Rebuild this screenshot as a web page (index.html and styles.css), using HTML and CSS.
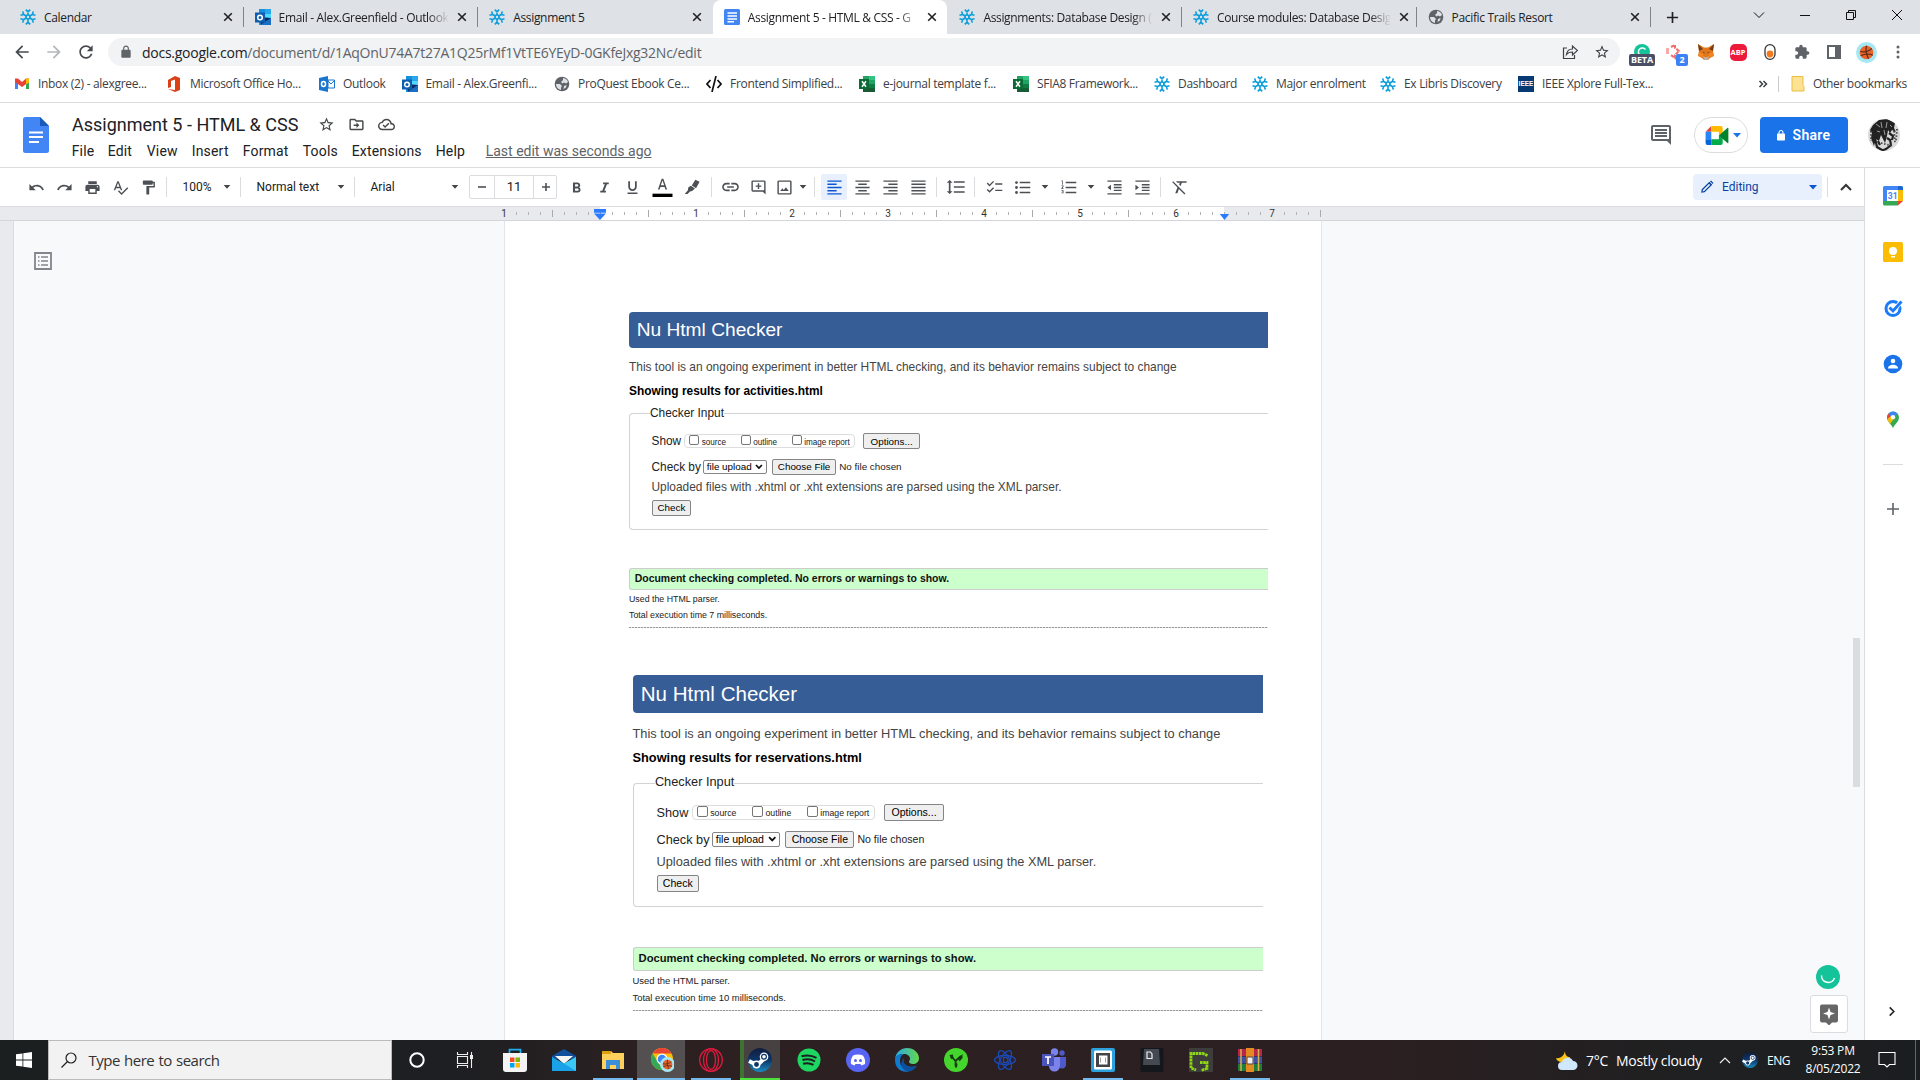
FILE: index.html
```html
<!DOCTYPE html>
<html lang="en">
<head>
<meta charset="utf-8">
<title>Assignment 5 - HTML &amp; CSS - Google Docs</title>
<link rel="stylesheet" href="styles.css">
</head>
<body>
<svg class="sprite" aria-hidden="true">
  <symbol id="flake" viewBox="0 0 16 16"><g fill="none" stroke="#0b9edb" stroke-width="1.600"><circle cx="8" cy="8" r="2"/><g id="arm"><path d="M8 6V2.600M5.800.6L8 2.900 10.200.6"/></g><use href="#arm" transform="rotate(60 8 8)"/><use href="#arm" transform="rotate(120 8 8)"/><use href="#arm" transform="rotate(180 8 8)"/><use href="#arm" transform="rotate(240 8 8)"/><use href="#arm" transform="rotate(300 8 8)"/></g></symbol>
  <symbol id="outlook" viewBox="0 0 16 16"><path fill="#1490df" d="M4 0h12v16H4z"/><path fill="#28a8ea" d="M10 0h6v5h-6z"/><path fill="#50d9ff" d="M10 5h6v4h-6z"/><path fill="#0a2767" d="M5 8l11 1v7H6z"/><path fill="#1a6fc4" d="M5 16l11-7v7z"/><path fill="#0f5fae" d="M0 3.500h10v10H0z"/><circle cx="5" cy="8.500" r="2.300" fill="none" stroke="#fff" stroke-width="1.500"/></symbol>
  <symbol id="outlook-old" viewBox="0 0 16 16"><path fill="#1a75cf" d="M0 2l9-2v16l-9-2z"/><path fill="#fff" stroke="#1a75cf" d="M9 4h6.500v8H9z"/><path fill="none" stroke="#1a75cf" d="M9 5l3 3 3.500-3.500"/><ellipse cx="4.500" cy="8" rx="2" ry="2.500" fill="none" stroke="#fff" stroke-width="1.500"/></symbol>
  <symbol id="docs" viewBox="0 0 16 16"><rect width="16" height="16" rx="1.500" fill="#4285f4"/><path d="M3.500 4h9.500M3.500 7h9.500M3.500 10h9.500M3.500 12.700h6.500" stroke="#fff" stroke-width="1.500"/></symbol>
  <symbol id="globe" viewBox="0 0 16 16"><circle cx="8" cy="8" r="7.300" fill="#5f6368"/><path fill="#dee1e6" d="M9 2c3 .5 4.500 2 5 4l-2 1.500-2-1-1.500 1L7 6l2-2zM2 8h4l2 2-1 1.500V14C4 13.500 2 11 2 8zM10 10l2.500-1-.5 2.500-2.500 1.500z"/></symbol>
  <symbol id="x" viewBox="0 0 16 16"><path d="M4.200 4.200l7.600 7.600M11.800 4.200l-7.600 7.600" stroke="#202124" stroke-width="1.600"/></symbol>
  <symbol id="excel" viewBox="0 0 16 16"><path fill="#21a366" d="M4 0h12v16H4z"/><path fill="#33c481" d="M10 0h6v4h-6z"/><path fill="#107c41" d="M10 8h6v4h-6z"/><path fill="#185c37" d="M4 12h12v4H4z"/><path fill="#0b6b34" d="M0 3h10v10H0z"/><path d="M3 5.300l4 5.400M7 5.300l-4 5.400" stroke="#fff" stroke-width="1.500"/></symbol>
  <symbol id="star" viewBox="0 0 24 24"><path d="M22 9.240l-7.190-.62L12 2 9.190 8.630 2 9.240l5.460 4.730L5.820 21 12 17.270 18.180 21l-1.630-7.030L22 9.240zM12 15.400l-3.760 2.270 1-4.280-3.320-2.880 4.380-.38L12 6.100l1.710 4.040 4.380.38-3.320 2.880 1 4.280L12 15.400z"/></symbol>
  <symbol id="lock" viewBox="0 0 24 24"><path d="M18 8h-1V6c0-2.760-2.240-5-5-5S7 3.240 7 6v2H6c-1.100 0-2 .9-2 2v10c0 1.100.9 2 2 2h12c1.100 0 2-.9 2-2V10c0-1.100-.9-2-2-2zM9 6c0-1.660 1.340-3 3-3s3 1.340 3 3v2H9V6z"/></symbol>
  <symbol id="down" viewBox="0 0 10 6"><path d="M0 0h10L5 5.500z"/></symbol>
  <linearGradient id="sg" x1="0" y1="0" x2="0" y2="1"><stop offset="0" stop-color="#111d3e"/><stop offset=".5" stop-color="#0d3567"/><stop offset="1" stop-color="#1a8bc0"/></linearGradient>
  <symbol id="steam" viewBox="0 0 24 24"><circle cx="12" cy="12" r="12" fill="url(#sg)"/><path d="M1 13l8 4 7-6" stroke="#fff" stroke-width="4" fill="none"/><circle cx="8.500" cy="16.500" r="3.200" fill="#0d3567" stroke="#fff" stroke-width="1.500"/><circle cx="16" cy="8.800" r="4.300" fill="#fff"/><circle cx="16" cy="8.800" r="2.400" fill="none" stroke="#0d3567" stroke-width="1.200"/></symbol>
  <symbol id="ball" viewBox="0 0 20 20"><circle cx="10" cy="10" r="10" fill="#a5e8f3"/><circle cx="10" cy="10" r="6.500" fill="#e8642c"/><path d="M4 9c4 1 8 0 11-3M10 3.500c-1 4 0 9 2 12.500M4.500 13c4-2 8-2 11.500-.5" stroke="#5c2a18" stroke-width="1.100" fill="none"/></symbol>
</svg>

<header class="tabs">
  <div class="tab"><svg class="fav"><use href="#flake"/></svg><span>Calendar</span><svg class="fav"><use href="#x"/></svg></div>
  <div class="tab"><svg class="fav"><use href="#outlook"/></svg><span class="fade">Email - Alex.Greenfield - Outlook</span><svg class="fav"><use href="#x"/></svg></div>
  <div class="tab last"><svg class="fav"><use href="#flake"/></svg><span>Assignment 5</span><svg class="fav"><use href="#x"/></svg></div>
  <div class="tab active"><svg class="fav"><use href="#docs"/></svg><span class="fade">Assignment 5 - HTML &amp; CSS - G</span><svg class="fav"><use href="#x"/></svg></div>
  <div class="tab"><svg class="fav"><use href="#flake"/></svg><span class="fade">Assignments: Database Design (</span><svg class="fav"><use href="#x"/></svg></div>
  <div class="tab"><svg class="fav"><use href="#flake"/></svg><span class="fade">Course modules: Database Desig</span><svg class="fav"><use href="#x"/></svg></div>
  <div class="tab"><svg class="fav"><use href="#globe"/></svg><span>Pacific Trails Resort</span><svg class="fav"><use href="#x"/></svg></div>
  <svg class="newtab" viewBox="0 0 14 14"><path d="M7 1v12M1 7h12" stroke="#202124" stroke-width="1.800"/></svg>
  <div class="winctl">
    <svg viewBox="0 0 12 12"><path d="M1 3.500l5 5 5-5"/></svg>
    <svg viewBox="0 0 12 12"><path d="M1 6.500h10"/></svg>
    <svg viewBox="0 0 12 12"><path d="M1.500 3.500h7v7h-7zM3.500 3.500v-2h7v7h-2"/></svg>
    <svg viewBox="0 0 12 12"><path d="M1 1l10 10M11 1L1 11"/></svg>
  </div>
</header>

<div class="addressbar">
  <svg class="nav" viewBox="0 0 24 24"><path d="M20 11H7.830l5.590-5.590L12 4l-8 8 8 8 1.410-1.410L7.830 13H20v-2z"/></svg>
  <svg class="nav off" viewBox="0 0 24 24"><path d="M4 11h12.170l-5.590-5.590L12 4l8 8-8 8-1.410-1.410L16.170 13H4v-2z"/></svg>
  <svg class="nav" viewBox="0 0 24 24"><path d="M17.650 6.350C16.200 4.900 14.210 4 12 4c-4.420 0-7.990 3.580-7.990 8s3.570 8 7.990 8c3.730 0 6.840-2.550 7.730-6h-2.080c-.82 2.330-3.040 4-5.650 4-3.310 0-6-2.690-6-6s2.690-6 6-6c1.660 0 3.140.69 4.220 1.780L13 11h7V4l-2.350 2.350z"/></svg>
  <div class="omnibox">
    <svg class="lock"><use href="#lock"/></svg>
    <span class="url"><b>docs.google.com</b>/document/d/1AqOnU74A7t27A1Q25rMf1VtTE6YEyD-0GKfeJxg32Nc/edit</span>
    <svg class="s16" viewBox="0 0 16 16"><path d="M5 4H1.500v10.500h11V11M4.500 10.500C5 6.500 7.500 5 10.500 5V2l5 4.500-5 4.500V8c-2.500 0-4.500.5-6 2.500z" fill="none" stroke="#3c4043" stroke-width="1.200"/></svg>
    <svg class="s16 dark"><use href="#star"/></svg>
  </div>
  <div class="exts">
    <div class="ext"><svg class="s16" viewBox="0 0 16 16"><circle cx="8" cy="8" r="8" fill="#15c39a"/><path d="M11.500 5.500a4 4 0 1 0 0 5" fill="none" stroke="#fff" stroke-width="1.500"/></svg><span class="badge beta">BETA</span></div>
    <div class="ext"><svg class="s16" viewBox="0 0 16 16"><path d="M0 4h3v6H0z" fill="#f9a7a7"/><path d="M5 3l4-2v3l4 3-4 4v3l-4-3" fill="none" stroke="#f26d6d" stroke-width="2" stroke-dasharray="3.500 1"/></svg><span class="badge count">2</span></div>
    <div class="ext"><svg class="s16" viewBox="0 0 16 16"><path d="M0 0l6 3.500h4L16 0l-1 7 1 5-4 2-2 2H6l-2-2-4-2 1-5z" fill="#e2761b"/><path d="M5 12l1.500 1h3L11 12l-1 4H6z" fill="#c0ad9e"/><path d="M1 12l3 1.500L5.500 10 1.500 8zM15 12l-3 1.500-1.500-3.500 4-2z" fill="#f6851b"/><path d="M4.500 8l1.800.2.2 1.300zM11.500 8l-1.800.2-.2 1.300z" fill="#233447"/><path d="M0 0l5 5-4 2zM16 0l-5 5 4 2z" fill="#763d16"/></svg></div>
    <div class="ext"><span class="abp">ABP</span></div>
    <div class="ext"><svg class="s16" viewBox="0 0 16 16"><rect x="3" y=".7" width="10" height="14.600" rx="5" fill="#fff" stroke="#333" stroke-width="1.300"/><circle cx="8" cy="10" r="3.400" fill="#f37a1f"/></svg></div>
    <div class="ext"><svg class="s16 grey" viewBox="0 0 24 24"><path d="M20.500 11H19V7c0-1.100-.9-2-2-2h-4V3.500C13 2.120 11.880 1 10.500 1S8 2.120 8 3.500V5H4c-1.100 0-1.990.9-1.990 2v3.800H3.500c1.490 0 2.700 1.210 2.700 2.700s-1.210 2.700-2.700 2.700H2V20c0 1.100.9 2 2 2h3.800v-1.500c0-1.490 1.210-2.700 2.700-2.700 1.490 0 2.700 1.210 2.700 2.700V22H17c1.100 0 2-.9 2-2v-4h1.500c1.380 0 2.500-1.120 2.500-2.500S21.880 11 20.500 11z"/></svg></div>
    <div class="ext"><svg class="s16 grey" viewBox="0 0 16 16"><path fill-rule="evenodd" d="M1 1h14v14H1zm2 2v10h6V3z"/></svg></div>
    <div class="ext"><svg class="s21"><use href="#ball"/></svg></div>
    <div class="ext"><svg class="s16 grey" viewBox="0 0 16 16"><circle cx="8" cy="3" r="1.500"/><circle cx="8" cy="8" r="1.500"/><circle cx="8" cy="13" r="1.500"/></svg></div>
  </div>
</div>

<nav class="bookmarks">
  <a><svg viewBox="0 0 16 16"><path d="M1 3v10h3V7" fill="#4285f4"/><path d="M15 3v10h-3V7" fill="#34a853"/><path d="M1 2.500h3l4 3.500 4-3.500h3V6l-7 5-7-5z" fill="#ea4335"/><path d="M12 2.500h3v4l-3 2z" fill="#fbbc04"/></svg><span>Inbox (2) - alexgree...</span></a>
  <a><svg viewBox="0 0 16 16"><path d="M2 4l7-4 5 2v12l-5 2-7-3 7 1V3.500L5 5v6l-3 1z" fill="#dc3e15"/></svg><span>Microsoft Office Ho...</span></a>
  <a><svg><use href="#outlook-old"/></svg><span>Outlook</span></a>
  <a><svg><use href="#outlook"/></svg><span>Email - Alex.Greenfi...</span></a>
  <a><svg><use href="#globe"/></svg><span>ProQuest Ebook Ce...</span></a>
  <a><svg viewBox="0 0 16 16"><path d="M4.500 4L1 8l3.500 4M11.500 4L15 8l-3.500 4M10 0L6 16" fill="none" stroke="#111" stroke-width="1.700"/></svg><span>Frontend Simplified...</span></a>
  <a><svg><use href="#excel"/></svg><span>e-journal template f...</span></a>
  <a><svg><use href="#excel"/></svg><span>SFIA8 Framework...</span></a>
  <a><svg><use href="#flake"/></svg><span>Dashboard</span></a>
  <a><svg><use href="#flake"/></svg><span>Major enrolment</span></a>
  <a><svg><use href="#flake"/></svg><span>Ex Libris Discovery</span></a>
  <a><i class="ieee">IEEE</i><span>IEEE Xplore Full-Tex...</span></a>
  <svg class="more" viewBox="0 0 10 8"><path d="M1.500 1l3 3-3 3M5.500 1l3 3-3 3" fill="none" stroke="#3c4043" stroke-width="1.500"/></svg>
  <a class="other"><svg viewBox="0 0 16 16"><path d="M2 .5h11v9l1 1v4.500H2z" fill="#fde293" stroke="#e8bf3f"/></svg><span>Other bookmarks</span></a>
</nav>

<div class="dochead">
  <svg class="doclogo" viewBox="0 0 26 36"><path d="M2.500 0H17l9 9v24.500a2.500 2.500 0 0 1-2.500 2.500h-21A2.500 2.500 0 0 1 0 33.500v-31A2.500 2.500 0 0 1 2.500 0z" fill="#4285f4"/><path d="M17 0l9 9h-9z" fill="#185abc"/><path d="M6 15.500h14M6 20h14M6 25h10" stroke="#fff" stroke-width="2"/></svg>
  <div class="doctitles">
    <div class="titlerow"><span class="title">Assignment 5 - HTML &amp; CSS</span>
      <svg><use href="#star"/></svg>
      <svg viewBox="0 0 24 24"><path d="M20 6h-8l-2-2H4c-1.100 0-2 .9-2 2v12c0 1.100.9 2 2 2h16c1.100 0 2-.9 2-2V8c0-1.100-.9-2-2-2zm0 12H4V6h5.200l2 2H20v10zm-8-1l4-4-4-4v3H8v2h4z"/></svg>
      <svg viewBox="0 0 24 24"><path d="M19.350 10.040C18.670 6.590 15.640 4 12 4 9.110 4 6.610 5.640 5.350 8.040 2.340 8.360 0 10.910 0 14c0 3.310 2.690 6 6 6h13c2.760 0 5-2.240 5-5 0-2.640-2.050-4.780-4.650-4.960zM19 18H6c-2.210 0-4-1.790-4-4s1.790-4 4-4h.7C7.400 7.700 9.500 6 12 6c3 0 5.500 2.500 5.500 6H19c1.700 0 3 1.300 3 3s-1.300 3-3 3zm-9-3.800l-2.100-2.100-1.400 1.400L10 17l6-6-1.400-1.400z"/></svg>
    </div>
    <div class="menus"><span>File</span><span>Edit</span><span>View</span><span>Insert</span><span>Format</span><span>Tools</span><span>Extensions</span><span>Help</span><u>Last edit was seconds ago</u></div>
  </div>
  <div class="headright">
    <svg class="s24 grey" viewBox="0 0 24 24"><path d="M21.990 4c0-1.100-.89-2-1.990-2H4c-1.100 0-2 .9-2 2v12c0 1.100.9 2 2 2h14l4 4-.01-18zM20 4v12H4V4zM18 12H6v2h12v-2zm0-3H6v2h12V9zm0-3H6v2h12V6z" fill-rule="evenodd"/></svg>
    <div class="meet"><svg class="cam" viewBox="0 0 24 20"><path d="M6 0v6H0z" fill="#ea4335"/><path d="M0 6h6v8H0z" fill="#2684fc"/><path d="M0 14h6v6H2a2 2 0 0 1-2-2z" fill="#0066da"/><path d="M6 0h10a2 2 0 0 1 2 2v6l-4 2V6H6z" fill="#ffba00"/><path d="M6 14h8v-4l4 2v6a2 2 0 0 1-2 2H6z" fill="#00ac47"/><path d="M14 10l9-8c.6-.5 1-.2 1 .5v15c0 .7-.4 1-1 .5z" fill="#00832d"/></svg><svg class="arr blue"><use href="#down"/></svg></div>
    <div class="share"><svg class="s14"><use href="#lock"/></svg>Share</div>
    <svg class="me" viewBox="0 0 32 32"><defs><clipPath id="round"><circle cx="16" cy="16" r="16"/></clipPath></defs><g clip-path="url(#round)"><path fill="#d9d9d9" d="M0 0h32v32H0z"/><path fill="#222" d="M5 6l6-5 8-1 8 4-1 5 2 4-4-2-2 3-2-3-1 6-2 7-4-8-2 6-3-2-2 7-3-8 1-5-2-3z"/><path d="M8 5l4 3M13 3l1 6M19 3l-1 6M9 12l3 1M22 6l2 2M16 11l1 5" stroke="#aaa" stroke-width=".9"/><path d="M7 19l2 9 5 3M19 19l3 2 1 5-5 4-5 2M21 14l4 3-1 4M10 22l2 4" stroke="#222" stroke-width="2.200" fill="none"/><path d="M26 12l1 12M29 10l-1 12M13 24l12 3M3 12v10" stroke="#444" stroke-width="1.800" stroke-dasharray="1.500 1.700"/></g></svg>
  </div>
</div>

<div class="workspace">
  <main>
    <div class="toolbar">
      <svg viewBox="0 0 24 24"><path d="M12.500 8c-2.650 0-5.050.99-6.900 2.600L2 7v9h9l-3.620-3.620c1.390-1.160 3.160-1.880 5.120-1.880 3.540 0 6.550 2.310 7.600 5.500l2.370-.78C21.080 11.030 17.150 8 12.500 8z"/></svg>
      <svg viewBox="0 0 24 24"><path d="M18.400 10.600C16.550 8.990 14.150 8 11.500 8c-4.650 0-8.580 3.030-9.960 7.220L3.900 16c1.050-3.190 4.050-5.500 7.600-5.500 1.950 0 3.730.72 5.120 1.880L13 16h9V7l-3.600 3.600z"/></svg>
      <svg viewBox="0 0 24 24"><path d="M19 8H5c-1.660 0-3 1.340-3 3v6h4v4h12v-4h4v-6c0-1.660-1.340-3-3-3zm-3 11H8v-5h8v5zm3-7c-.55 0-1-.45-1-1s.45-1 1-1 1 .45 1 1-.45 1-1 1zm-1-9H6v4h12V3z"/></svg>
      <svg viewBox="0 0 24 24"><path d="M12.450 16h2.090L9.430 3H7.570L2.460 16h2.090l1.120-3h5.640l1.140 3zm-6.020-5L8.500 5.480 10.570 11H6.430zm15.160.59l-8.090 8.090L9.830 16l-1.410 1.410 5.090 5.090L23 13l-1.410-1.410z"/></svg>
      <svg viewBox="0 0 24 24"><path d="M18 4V3c0-.55-.45-1-1-1H5c-.55 0-1 .45-1 1v4c0 .55.45 1 1 1h12c.55 0 1-.45 1-1V6h1v4H9v11c0 .55.45 1 1 1h2c.55 0 1-.45 1-1v-9h8V4h-3z"/></svg>
      <i class="sep"></i>
      <div class="drop"><span>100%</span><svg class="arr"><use href="#down"/></svg></div>
      <i class="sep"></i>
      <div class="drop"><span>Normal text</span><svg class="arr"><use href="#down"/></svg></div>
      <i class="sep"></i>
      <div class="drop font"><span>Arial</span><svg class="arr"><use href="#down"/></svg></div>
      <div class="size"><svg viewBox="0 0 10 10"><path d="M1 4.200h8v1.600H1z"/></svg><span>11</span><svg viewBox="0 0 10 10"><path d="M1 4.200h3.200V1h1.600v3.200H9v1.600H5.800V9H4.200V5.800H1z"/></svg></div>
      <svg class="after" viewBox="0 0 24 24"><path d="M15.600 11.790c.97-.67 1.650-1.770 1.650-2.790 0-2.260-1.750-4-4-4H7v14h7.040c2.090 0 3.710-1.700 3.710-3.790 0-1.520-.86-2.820-2.150-3.420zM10 7.500h3c.83 0 1.500.67 1.500 1.500s-.67 1.500-1.500 1.500h-3v-3zm3.500 9H10v-3h3.500c.83 0 1.500.67 1.500 1.500s-.67 1.500-1.500 1.500z"/></svg>
      <svg viewBox="0 0 24 24"><path d="M10 5v2.500h2.500l-3.700 9H6V19h8v-2.500h-2.200l3.700-9H18V5z"/></svg>
      <svg viewBox="0 0 24 24"><path d="M12 17c3.310 0 6-2.690 6-6V3h-2.500v8c0 1.930-1.570 3.500-3.500 3.500S8.500 12.930 8.500 11V3H6v8c0 3.310 2.690 6 6 6zm-7 2v2h14v-2H5z"/></svg>
      <svg class="wide" viewBox="0 0 24 24"><path d="M11 2L6.500 15h2l1-3h5l1 3h2L13 2zM10 10L12 4.200 14 10z"/><path d="M0 20h24v4H0z" fill="#000"/></svg>
      <svg viewBox="0 0 24 24"><path d="M16 1l6 3-5 9-6-4zM9.500 9.500l6 4-4 3.500-3 .5L5 21H1l4.500-5 .5-4z"/></svg>
      <i class="sep"></i>
      <svg class="wide" viewBox="0 0 24 24"><path d="M3.900 12c0-1.710 1.390-3.100 3.100-3.100h4V7H7c-2.760 0-5 2.240-5 5s2.240 5 5 5h4v-1.900H7c-1.710 0-3.100-1.390-3.100-3.100zM8 13h8v-2H8v2zm9-6h-4v1.900h4c1.710 0 3.100 1.390 3.100 3.100s-1.390 3.100-3.100 3.100h-4V17h4c2.760 0 5-2.240 5-5s-2.240-5-5-5z"/></svg>
      <svg viewBox="0 0 24 24"><path fill-rule="evenodd" d="M4 2h16a2 2 0 0 1 2 2v18l-4-4H4a2 2 0 0 1-2-2V4a2 2 0 0 1 2-2zm0 2v12h16V4zm7 2h2v3h3v2h-3v3h-2v-3H8V9h3z"/></svg>
      <svg viewBox="0 0 24 24"><path fill-rule="evenodd" d="M4 2h16a2 2 0 0 1 2 2v16a2 2 0 0 1-2 2H4a2 2 0 0 1-2-2V4a2 2 0 0 1 2-2zm0 2v16h16V4zm2 13l3-4 2 2.500 3-4 4 5.500z"/></svg>
      <svg class="arr"><use href="#down"/></svg>
      <i class="sep"></i>
      <div class="on"><svg viewBox="0 0 24 24"><path d="M2 2h20v2H2zM2 6.500h13v2H2zM2 11h20v2H2zM2 15.500h13v2H2zM2 20h20v2H2z"/></svg></div>
      <svg viewBox="0 0 24 24"><path d="M2 2h20v2H2zM6 6.500h12v2H6zM2 11h20v2H2zM6 15.500h12v2H6zM2 20h20v2H2z"/></svg>
      <svg viewBox="0 0 24 24"><path d="M2 2h20v2H2zM9 6.500h13v2H9zM2 11h20v2H2zM9 15.500h13v2H9zM2 20h20v2H2z"/></svg>
      <svg viewBox="0 0 24 24"><path d="M2 2h20v2H2zM2 6.500h20v2H2zM2 11h20v2H2zM2 15.500h20v2H2zM2 20h20v2H2z"/></svg>
      <i class="sep"></i>
      <svg class="wide" viewBox="0 0 24 24"><path d="M6 7h2.500L5 3.500 1.500 7H4v10H1.500L5 20.500 8.500 17H6V7zm4-2v2h13V5H10zm0 14h13v-2H10v2zm0-6h13v-2H10v2z"/></svg>
      <i class="sep"></i>
      <svg viewBox="0 0 24 24"><path d="M13 6h10v2H13zM13 15h10v2H13zM1 6.500l1.400-1.400L5 7.700l5-5L11.400 4 5 10.500zM1 15.500l1.400-1.400L5 16.700l5-5 1.400 1.400L5 19.500z"/></svg>
      <svg viewBox="0 0 24 24"><path d="M8 4h15v2H8zM8 11h15v2H8zM8 18h15v2H8z"/><circle cx="3.500" cy="5" r="2"/><circle cx="3.500" cy="12" r="2"/><circle cx="3.500" cy="19" r="2"/></svg>
      <svg class="arr"><use href="#down"/></svg>
      <svg viewBox="0 0 24 24"><path d="M8 4h15v2H8zM8 11h15v2H8zM8 18h15v2H8zM2 17h2v.5H3v1h1v.5H2v1h3v-4H2v1zm1-9h1V2H2v1h1v5zm-1 2h1.800L2 13.100v.9h3v-1H3.200L5 10.900V9H2v1z"/></svg>
      <svg class="arr"><use href="#down"/></svg>
      <svg viewBox="0 0 24 24"><path d="M11 17h11v-2H11v2zm-9-5l5 4V8l-5 4zm0 10h20v-2H2v2zM2 2v2h20V2H2zm9 7h11V7H11v2zm0 4h11v-2H11v2z"/></svg>
      <svg viewBox="0 0 24 24"><path d="M2 22h20v-2H2v2zM2 8v8l5-4-5-4zm9 9h11v-2H11v2zM2 2v2h20V2H2zm9 7h11V7H11v2zm0 4h11v-2H11v2z"/></svg>
      <i class="sep"></i>
      <svg viewBox="0 0 24 24"><path d="M3 3L1.600 4.400l7.500 7.500L6 20h3l2.200-6 7.800 7.800 1.400-1.400zM7 3l2 2.300h3.400L11.600 8l2 2 1.700-4.700H22V3z"/></svg>
      <div class="editing"><svg viewBox="0 0 24 24"><path fill-rule="evenodd" d="M2 22l1-6L16 3l5 5L8 21zm2.500-2.500l2.700-.5L17.500 8.500 15.500 6.500 5 17zM17 2l2-1 4 4-1 2z"/></svg><span>Editing</span><svg class="arr"><use href="#down"/></svg></div>
      <i class="sep"></i>
      <svg class="up" viewBox="0 0 12 8"><path d="M1 7l5-5 5 5" fill="none" stroke="#333" stroke-width="2"/></svg>
    </div>
    <div class="ruler">
      <div class="inch grey"><b>1</b></div><div class="inch"></div><div class="inch"><b>1</b></div><div class="inch"><b>2</b></div><div class="inch"><b>3</b></div><div class="inch"><b>4</b></div><div class="inch"><b>5</b></div><div class="inch half"><b>6</b></div><div class="inch half grey"></div><div class="inch tail grey"><b>7</b></div>
      <svg class="mark left" viewBox="0 0 13 12"><path d="M0 0h13v4H0zM0 5h13L6.500 12z" fill="#2a7bfd"/></svg>
      <svg class="mark right" viewBox="0 0 11 7"><path d="M0 0h11L5.500 7z" fill="#2a7bfd"/></svg>
    </div>
    <div class="canvas">
      <div class="vruler"></div>
      <svg class="outline" viewBox="0 0 18 18"><path d="M1 1h16v16H1z" fill="none" stroke="#80868b" stroke-width="1.800"/><path d="M4 5h1.500M7 5h7M4 9h1.500M7 9h7M4 13h1.500M7 13h7" stroke="#80868b" stroke-width="1.700"/></svg>
      <article class="page">
        <section class="shot one">
          <h1>Nu Html Checker</h1>
          <p class="intro">This tool is an ongoing experiment in better HTML checking, and its behavior remains subject to change</p>
          <h2>Showing results for activities.html</h2>
          <div class="input">
            <div class="legend">Checker Input</div>
            <div class="row show"><span>Show</span><div class="opts"><i class="cb"></i><em>source</em><i class="cb"></i><em>outline</em><i class="cb"></i><em>image report</em></div><div class="btn options">Options...</div></div>
            <div class="row by"><span>Check by</span><div class="btn select">file upload<svg viewBox="0 0 8 6"><path d="M1 1l3 3.200L7 1" fill="none" stroke="#111" stroke-width="1.700"/></svg></div><div class="btn choose">Choose File</div><small>No file chosen</small></div>
            <p class="note">Uploaded files with .xhtml or .xht extensions are parsed using the XML parser.</p>
            <div class="btn check">Check</div>
          </div>
          <div class="ok">Document checking completed. No errors or warnings to show.</div>
          <p class="stat">Used the HTML parser.</p>
          <p class="stat">Total execution time 7 milliseconds.</p>
          <div class="rule"></div>
        </section>
        <section class="shot two">
          <h1>Nu Html Checker</h1>
          <p class="intro">This tool is an ongoing experiment in better HTML checking, and its behavior remains subject to change</p>
          <h2>Showing results for reservations.html</h2>
          <div class="input">
            <div class="legend">Checker Input</div>
            <div class="row show"><span>Show</span><div class="opts"><i class="cb"></i><em>source</em><i class="cb"></i><em>outline</em><i class="cb"></i><em>image report</em></div><div class="btn options">Options...</div></div>
            <div class="row by"><span>Check by</span><div class="btn select">file upload<svg viewBox="0 0 8 6"><path d="M1 1l3 3.200L7 1" fill="none" stroke="#111" stroke-width="1.700"/></svg></div><div class="btn choose">Choose File</div><small>No file chosen</small></div>
            <p class="note">Uploaded files with .xhtml or .xht extensions are parsed using the XML parser.</p>
            <div class="btn check">Check</div>
          </div>
          <div class="ok">Document checking completed. No errors or warnings to show.</div>
          <p class="stat">Used the HTML parser.</p>
          <p class="stat">Total execution time 10 milliseconds.</p>
          <div class="rule"></div>
        </section>
      </article>
      <div class="scroll"></div>
      <svg class="grammar" viewBox="0 0 24 24"><circle cx="12" cy="12" r="12" fill="#15c39a"/><path d="M5.500 10.500a6.700 6.700 0 0 0 13 2.500" fill="none" stroke="#fff" stroke-width="1.500"/></svg>
      <div class="explore"><svg viewBox="0 0 18 20"><path d="M2 0h14a2 2 0 0 1 2 2v14a2 2 0 0 1-2 2h-4l-3 3-3-3H2a2 2 0 0 1-2-2V2a2 2 0 0 1 2-2z" fill="#666"/><path d="M9 3l1.500 4.500L15 9l-4.500 1.500L9 15l-1.500-4.500L3 9l4.500-1.500z" fill="#fff"/></svg></div>
    </div>
  </main>
  <aside class="side">
    <svg viewBox="0 0 20 20"><path fill="#fff" d="M0 0h20v20H0z"/><path d="M0 1.500A1.500 1.500 0 0 1 1.500 0H15v4H4v11H0z" fill="#4285f4"/><path d="M15 0h3.500A1.500 1.500 0 0 1 20 1.500V4h-5z" fill="#1967d2"/><path d="M15 4h5v11h-5z" fill="#fbbc04"/><path d="M0 15h15v4.500H1.500A1.500 1.500 0 0 1 0 18z" fill="#34a853"/><path d="M15 15h5l-5 4.500z" fill="#ea4335"/><text x="9.700" y="12.800" text-anchor="middle" font-size="8.500" font-weight="bold" font-family="Roboto, sans-serif" fill="#4285f4">31</text></svg>
    <svg viewBox="0 0 20 20"><rect width="20" height="20" rx="1.500" fill="#fbbc04"/><circle cx="10" cy="9" r="4" fill="#fff"/><path d="M8 11h4v2H8zM8 14h4v1.500H8z" fill="#fff"/></svg>
    <svg viewBox="0 0 20 20"><circle cx="10" cy="10.500" r="7" fill="none" stroke="#1a7cf8" stroke-width="3"/><path d="M13 9.500L18 4" fill="none" stroke="#fff" stroke-width="4.500"/><path d="M6.500 9.500l3.500 3.500L18.500 3.500" fill="none" stroke="#1a7cf8" stroke-width="2.900"/></svg>
    <svg viewBox="0 0 20 20"><circle cx="10" cy="10" r="9.300" fill="#1a73e8"/><circle cx="10" cy="7" r="2.300" fill="#fff"/><path d="M5 14.500c0-5 10-5 10 0z" fill="#fff"/></svg>
    <svg viewBox="0 0 20 20"><path d="M10 18.500C9.500 15 4 12 4 7.500a6 6 0 0 1 12 0C16 12 10.500 15 10 18.500z" fill="#34a853"/><path d="M5.200 4A6 6 0 0 1 14.500 3.500L7 12 4.500 9.800z" fill="#4285f4"/><path d="M5.300 3.800L8 7 4.200 9.300A6 6 0 0 1 5.300 3.800z" fill="#ea4335"/><path d="M4.200 9.300L8 6l2 4-3 4z" fill="#fbbc04"/><circle cx="10" cy="7.300" r="2.200" fill="#fff"/></svg>
    <hr>
    <svg class="plus" viewBox="0 0 14 14"><path d="M7 1v12M1 7h12" stroke="#5f6368" stroke-width="1.600"/></svg>
    <svg class="next" viewBox="0 0 8 12"><path d="M1.500 1.500L6 6l-4.500 4.500" fill="none" stroke="#222" stroke-width="1.700"/></svg>
  </aside>
</div>

<footer class="taskbar">
  <div class="startbtn"><svg class="s16" viewBox="0 0 16 16"><path d="M0 2.300L6.500 1.400v6.200H0zM7.300 1.300L16 0v7.600H7.300zM0 8.400h6.500v6.200L0 13.700zM7.300 8.400H16V16l-8.700-1.300z" fill="#fff"/></svg></div>
  <div class="search"><svg class="s16" viewBox="0 0 16 16"><circle cx="10" cy="6" r="5" fill="none" stroke="#222" stroke-width="1.200"/><path d="M6.500 9.500L.5 15.500" stroke="#222" stroke-width="1.300"/></svg>Type here to search</div>
  <div class="app"><svg viewBox="0 0 24 24"><circle cx="12" cy="12" r="6.700" fill="none" stroke="#fff" stroke-width="2"/></svg></div>
  <div class="app"><svg viewBox="0 0 24 24"><path d="M3.500 8.500h10v7h-10zM3.500 4v2.500h10V4M3.500 20v-2.500h10V20M17.500 4v16" fill="none" stroke="#eee" stroke-width="1.100"/><path d="M16 7h3v4h-3z" fill="#eee"/></svg></div>
  <div class="app"><svg viewBox="0 0 24 24"><path d="M6.500 6V1.700h11V6" fill="none" stroke="#1cb0f0" stroke-width="1.700"/><path d="M0 5h24v16a3 3 0 0 1-3 3H3a3 3 0 0 1-3-3z" fill="#f4f4f4"/><path d="M7 9.500h4.500V14H7z" fill="#f25022"/><path d="M12.500 9.500H17V14h-4.500z" fill="#7fba00"/><path d="M7 15h4.500v4.500H7z" fill="#00a4ef"/><path d="M12.500 15H17v4.500h-4.500z" fill="#ffb900"/></svg></div>
  <div class="app"><svg viewBox="0 0 24 24"><path d="M0 8l12-7 12 7v3H0z" fill="#0f4f9c"/><path d="M3 8h18l-9 8z" fill="#f4f4f4"/><path d="M0 9l12 6.500L24 9v14H0z" fill="#1ba1e8"/><path d="M12 15.500L24 9v14z" fill="#3cc8f5"/></svg></div>
  <div class="app run"><svg viewBox="0 0 24 24"><path d="M1 3h9l2 2h11v16H1z" fill="#ffd15c"/><path d="M1 3h9v3H1z" fill="#e0a010"/><path d="M5 21v-9h14v9h-4v-4H9v4z" fill="#3a8fd8"/></svg></div>
  <div class="app run current"><svg viewBox="0 0 24 24"><circle cx="12" cy="11" r="11" fill="#fbbc04"/><path d="M2.500 5.500A11 11 0 0 1 21.500 5.500H12z" fill="#ea4335"/><path d="M2.500 5.500L8 14l5 8A11 11 0 0 1 2.500 5.500z" fill="#34a853"/><circle cx="12" cy="11" r="5.500" fill="#fff"/><circle cx="12" cy="11" r="4.300" fill="#4285f4"/><use href="#ball" x="10" y="9" width="15" height="15"/></svg></div>
  <div class="app run"><svg viewBox="0 0 24 24"><g fill="none" stroke="#e0193f" stroke-width="1.300"><circle cx="12" cy="12" r="11.300"/><ellipse cx="12" cy="12" rx="4.500" ry="9.500"/><ellipse cx="12" cy="12" rx="7.500" ry="11.300"/></g></svg></div>
  <div class="app game"><svg><use href="#steam"/></svg></div>
  <div class="app"><svg viewBox="0 0 24 24"><circle cx="12" cy="12" r="11.500" fill="#1ed760"/><path d="M4.500 8.300c5-1.500 10.500-1 15 1.500M5.500 12c4-1.200 9-.8 12.500 1.500M6 15.700c4-1 7.500-.6 10.500 1.200" fill="none" stroke="#1d2020" stroke-width="2"/></svg></div>
  <div class="app"><svg viewBox="0 0 24 24"><circle cx="12" cy="12" r="12" fill="#5865f2"/><path d="M7 7.500c3-1.300 7-1.300 10 0 2 3 2.500 5.500 2 8.500l-3.500 1.500-1-1.500h-5l-1 1.500L5 16c-.5-3 0-5.500 2-8.500z" fill="#fff"/><circle cx="9.500" cy="12.500" r="1.500" fill="#5865f2"/><circle cx="14.500" cy="12.500" r="1.500" fill="#5865f2"/></svg></div>
  <div class="app"><svg viewBox="0 0 24 24"><defs><linearGradient id="eg"><stop offset="0" stop-color="#2aa8e8"/><stop offset="1" stop-color="#63d84c"/></linearGradient></defs><path d="M0 11C1 4 6 0 12 0c7 0 12 5 12 10 0 4-3 6-6 6s-4-1-4-2.500c0-1 1-1 1-3C15 8 12 6 9 6 4 6 1 8 0 11z" fill="url(#eg)"/><path d="M0 12c0-4 4-6 9-6-3 1-4 4-4 7 0 5 4 9 9 10.500C5 25 0 19 0 12z" fill="#0f7bd0"/><path d="M10 9c-4 5 1 12 12 8.500-2 4-5 5.500-8 6C7 23 3 15 10 9z" fill="#0c519c"/></svg></div>
  <div class="app"><svg viewBox="0 0 24 24"><circle cx="12" cy="12" r="12" fill="#44d62c"/><path d="M11.500 13L7.500 8.500M11.500 13l5.500-5M11.500 13l.5 5" stroke="#173a14" stroke-width="1.800" fill="none"/><path d="M5.500 7l3.500-.5.500 4-2.500.5zM14 10.500l4.500-4.500v4l-3 3.500zM10.500 15.500h3l-.5 4h-2z" fill="#173a14"/></svg></div>
  <div class="app"><svg viewBox="0 0 24 24"><g fill="none" stroke="#1b49b8" stroke-width="1.300"><ellipse cx="12" cy="12" rx="10.500" ry="4.500"/><ellipse cx="12" cy="12" rx="10.500" ry="4.500" transform="rotate(60 12 12)"/><ellipse cx="12" cy="12" rx="10.500" ry="4.500" transform="rotate(120 12 12)"/><path d="M10.500 9.500h2a2 2 0 0 1 0 5h-2z"/></g></svg></div>
  <div class="app"><svg viewBox="0 0 24 24"><circle cx="12.500" cy="4" r="3.700" fill="#7b83eb"/><circle cx="20" cy="5" r="2.700" fill="#5059c9"/><path d="M16 9h8v7a4 4 0 0 1-6 4z" fill="#5059c9"/><path d="M7 9h11v9a5.500 5.500 0 0 1-11 0z" fill="#7b83eb"/><path d="M0 6h12v12H0z" fill="#4b53bc"/><path d="M3 9h6M6 9v7" stroke="#fff" stroke-width="1.700"/></svg></div>
  <div class="app run"><svg viewBox="0 0 24 24"><rect width="24" height="24" rx="2" fill="#2ba2de"/><rect x="3" y="2.500" width="18" height="19" rx="1.500" fill="#fff"/><path fill-rule="evenodd" d="M5 5h14v14H5zm3 2.500v9h2v-2h-.5v-5h.5v-2zm6 0v2h.5v5H14v2h2.500v-9z" fill="#444"/><path d="M10 7.500h4v9h-4z" fill="#fff"/></svg></div>
  <div class="app"><svg viewBox="0 0 24 24"><rect x=".5" width="23" height="24" rx="2" fill="#14171b"/><path d="M4 1h15l1 16H3z" fill="#454a52"/><path d="M7 4h3.500l1.500 2v4.500H7z" fill="none" stroke="#eee" stroke-width="1.200"/></svg></div>
  <div class="app"><svg viewBox="0 0 24 24"><path d="M0 0h24v24H0z" fill="#3d3d3b"/><path d="M18.500 7.500L14 5.500 2 5.500V20l5 2 M11 14.500h7v6l-6 2" fill="none" stroke="#8ed912" stroke-width="2.800" stroke-dasharray="2.600 .6"/></svg></div>
  <div class="app run"><svg viewBox="0 0 24 24"><path d="M0 1h24v7H0z" fill="#b8264c"/><path d="M0 8.500h24v7H0z" fill="#3b50a8"/><path d="M0 16h24v7H0z" fill="#1c7f3c"/><path d="M3 1v22M20.500 1v22" stroke="#d9b24a" stroke-width="1.500"/><path d="M8 0h8v24H8z" fill="#e58a20"/><path d="M9 9h6v7H9z" fill="#eee" stroke="#544"/></svg></div>
  <div class="tray">
    <svg class="weather" viewBox="0 0 22 19"><path d="M9 0c0 4 2 6 5 6-1 4-5 6-9 5C2 10.500.5 9 0 7c4 1 8-2 9-7z" fill="#fcc419"/><path d="M6 19a4 4 0 0 1 0-8 6 6 0 0 1 11-1 4.500 4.500 0 0 1 0 9z" fill="#cfe8fb"/></svg>
    <span class="temp">7°C</span><span class="cond">Mostly cloudy</span>
    <svg class="chev" viewBox="0 0 12 8"><path d="M1 7l5-5 5 5" fill="none" stroke="#eee" stroke-width="1.200"/></svg>
    <svg class="s16"><use href="#steam"/></svg>
    <span class="lang">ENG</span>
    <div class="clock"><span>9:53 PM</span><span>8/05/2022</span></div>
    <svg class="notif" viewBox="0 0 18 18"><path d="M1 1.500h16v12h-5.500L9 16l-2.500-2.500H1z" fill="none" stroke="#fff" stroke-width="1.100"/></svg>
  </div>
</footer>
</body>
</html>
```
FILE: styles.css
```css
* { box-sizing: border-box; }
body {
  margin: 0;
  width: 1920px;
  height: 1080px;
  overflow: hidden;
  display: flex;
  flex-direction: column;
  background: #fff;
  color: #202124;
  font-family: "Open Sans", "Noto Sans", sans-serif;
  font-size: 12px;
}
svg { display: block; flex: none; }
.sprite { position: absolute; width: 0; height: 0; }
.s14 { width: 14px; height: 14px; }
.s16 { width: 16px; height: 16px; }
.s21 { width: 21px; height: 21px; }
.s24 { width: 24px; height: 24px; }
.grey { fill: #5f6368; }
.dark { fill: #3c4043; }

/* browser tabs */
.tabs {
  flex: none;
  height: 34px;
  padding-left: 9px;
  display: flex;
  align-items: center;
  background: #dee1e6;
}
.tab {
  width: 234.600px;
  height: 20px;
  padding: 0 7px 0 11px;
  display: flex;
  align-items: center;
  border-right: 1px solid #808489;
  letter-spacing: -.33px;
}
.tab.last { border-color: transparent; }
.tab span { flex: 1; margin: 0 8px; white-space: nowrap; }
.tab .fade { -webkit-mask-image: linear-gradient(90deg, #000 88%, transparent); mask-image: linear-gradient(90deg, #000 88%, transparent); margin-right: 5px; }
.tab.active { height: 34px; background: #fff; border: 0; border-radius: 8px 8px 0 0; }
.tab.active + .tab { padding-left: 12px; }
.fav { width: 16px; height: 16px; }
.newtab { width: 13px; height: 13px; margin-left: 15px; }
.winctl { margin-left: auto; display: flex; gap: 34px; padding: 0 17px 4px 0; }
.winctl svg { width: 12px; height: 12px; fill: none; stroke: #111; stroke-width: 1; }

/* address bar */
.addressbar { flex: none; height: 36px; padding-left: 12px; display: flex; align-items: center; }
.nav { width: 20px; height: 20px; margin-right: 12px; fill: #46494d; }
.nav.off { fill: #b4b7ba; }
.omnibox {
  width: 1512px;
  height: 28px;
  padding: 0 10px;
  display: flex;
  align-items: center;
  gap: 16px;
  border-radius: 14px;
  background: #f1f3f4;
}
.lock { width: 14px; height: 14px; margin: 0 -7px 0 1px; fill: #5f6368; }
.url { flex: 1; color: #5f6368; font-size: 14px; letter-spacing: -.26px; }
.url b { color: #202124; font-weight: 400; }
.exts { display: flex; margin-left: 6px; }
.ext { width: 32px; height: 28px; display: grid; place-items: center; position: relative; }
.badge { position: absolute; color: #fff; font: bold 9px/12px "Open Sans", sans-serif; text-align: center; border-radius: 2px; }
.beta { left: 3px; bottom: 0; width: 26px; background: #4a4f66; letter-spacing: -.1px; }
.count { left: 18px; bottom: 0; width: 12px; background: #3b82f6; }
.abp { width: 17px; height: 17px; border-radius: 5px; background: #ec1a3b; color: #fff; font: bold 7.500px/17px "Open Sans", sans-serif; text-align: center; }

/* bookmarks */
.bookmarks {
  flex: none;
  height: 33px;
  padding: 0 0 5px 14px;
  display: grid;
  grid-template-columns: 152px 153px 82.500px 152.500px 152px 153px 154px 141px 98px 128px 138px 239px 18px auto;
  align-items: center;
  border-bottom: 1px solid #dadce0;
  letter-spacing: -.31px;
  color: #3c4043;
}
.bookmarks a { display: flex; align-items: center; gap: 8px; white-space: nowrap; }
.bookmarks a svg { width: 16px; height: 16px; }
.ieee { width: 16px; height: 16px; background: #073a72; color: #fff; font: bold 6.500px/16px "Liberation Sans", sans-serif; text-align: center; letter-spacing: 0; }
.bookmarks .more { width: 10px; height: 8px; margin-left: 1px; }
.bookmarks .other { height: 16px; border-left: 1px solid #c8cacd; padding-left: 11px; gap: 7px; margin-left: 3px; }

/* document header */
.dochead { flex: none; height: 65px; padding-left: 23px; display: flex; border-bottom: 1px solid #dadce0; font-family: Roboto, sans-serif; }
.doclogo { width: 26px; height: 36px; margin-top: 14px; }
.doctitles { margin-left: 23px; padding-top: 8px; }
.titlerow { height: 26px; display: flex; align-items: center; }
.titlerow svg { width: 17px; height: 17px; fill: #444746; margin-right: 13px; }
.title { width: 245.500px; font-size: 18px; white-space: nowrap; }
.menus { height: 28px; display: grid; grid-template-columns: 36px 39px 45px 51px 60px 49px 84px 50px auto; align-items: center; margin-left: -.3px; font-size: 14px; letter-spacing: .18px; white-space: nowrap; }
.menus u { color: #5f6368; letter-spacing: 0; }
.headright { margin-left: auto; height: 64px; display: flex; align-items: center; padding-right: 20px; }
.meet { width: 54px; height: 36px; margin: 0 12px 0 21px; display: flex; align-items: center; gap: 4px; padding-left: 10px; border: 1px solid #dadce0; border-radius: 18px; }
.cam { width: 24px; height: 19px; }
.arr { width: 8px; height: 5px; fill: #444746; }
.arr.blue { fill: #1a73e8; }
.share { width: 88px; height: 36px; margin-right: 20px; display: flex; align-items: center; justify-content: center; gap: 6px; border-radius: 4px; background: #1a73e8; color: #fff; fill: #fff; font-size: 14px; font-weight: 600; letter-spacing: .3px; padding-right: 3px; }
.share .s14 { width: 12px; height: 13px; }
.me { width: 32px; height: 32px; }

.workspace { flex: 1; min-height: 0; display: flex; }
main { width: 1864px; display: flex; flex-direction: column; }

/* toolbar */
.toolbar {
  flex: none;
  height: 39px;
  padding-left: 22px;
  display: grid;
  grid-template-columns: repeat(5, 28px) 9px 65px 9px 105px 9px 110px 88px 33px 28px 28px 32px 29px 9px 28px 28px 25px 12px 11px repeat(4, 28px) 9px 28px 11px 28px 28px 18px 28px 18px 28px 28px 9px 28px 629px 10px 28px;
  align-items: center;
  justify-items: center;
  border-bottom: 1px solid #dadce0;
  font-family: Roboto, sans-serif;
  fill: #4c5054;
}
.toolbar > svg { width: 17px; height: 17px; }
.toolbar > .wide { width: 21px; height: 20px; }
.toolbar > .after { margin-left: 5px; }
.toolbar > .arr, .toolbar .drop .arr { width: 8px; height: 4px; }
.toolbar > .up { width: 12px; height: 8px; }
.sep { width: 1px; height: 20px; background: #dadce0; }
.drop { width: 100%; display: flex; align-items: center; justify-content: space-between; padding: 0 5px 0 11.500px; }
.drop.font { padding-right: 10px; }
.size { width: 88px; height: 24px; display: grid; grid-template-columns: 24px 40px 24px; place-items: center; border: 1px solid #dadce0; border-radius: 2px; font-size: 13px; }
.size svg { width: 10px; height: 10px; }
.size span { width: 40px; line-height: 22px; text-align: center; border: solid #dadce0; border-width: 0 1px; }
.on { width: 26px; height: 26px; display: grid; place-items: center; border-radius: 2px; background: #e8f0fe; fill: #0b57d0; }
.on svg { width: 17px; height: 17px; }
.editing { justify-self: end; width: 129px; height: 26px; display: flex; align-items: center; border-radius: 4px; background: #e8f0fe; color: #0842a0; fill: #0842a0; padding: 0 5px 0 7px; }
.editing .arr { fill: #0b57d0; }
.editing svg:first-child { width: 14px; height: 14px; }
.editing span { flex: 1; margin-left: 8px; }

/* ruler */
.ruler { flex: none; height: 14px; padding-left: 504px; display: flex; position: relative; background: #e8eaed; border-bottom: 1px solid #d3d5d9; }
.inch {
  width: 96px;
  background:
    linear-gradient(#a6a9ad, #a6a9ad) 48px 50% / 1px 7px no-repeat,
    linear-gradient(90deg, #b0b2b6 1px, transparent 1px) 0 50% / 12px 3px repeat-x,
    #fff;
}
.inch.grey { background-color: #e8eaed; }
.inch.half { width: 48px; }
.inch.tail { width: 49px; }
.inch b { display: block; width: 10px; margin-left: -5px; text-align: center; font: 10px/13px Roboto, sans-serif; color: #333; background: inherit; background-image: none; }
.mark { position: absolute; }
.mark.left { left: 594px; top: 2px; width: 12px; height: 11px; }
.mark.right { left: 1218.500px; top: 7px; width: 11px; height: 6px; }

/* canvas */
.canvas { flex: 1; min-height: 0; display: flex; position: relative; background: #f8f9fa; }
.vruler { width: 14px; background: #e8eaed; border-right: 1px solid #dadce0; }
.outline { width: 18px; height: 18px; margin: 31px 0 0 20px; }
.page { width: 818px; margin-left: 452px; padding-top: 91px; background: #fff; border: solid #e3e5e8; border-width: 0 1px; }
.scroll { position: absolute; left: 1853px; top: 417px; width: 7px; height: 149px; background: #dadce0; }
.grammar { position: absolute; left: 1816px; top: 744px; width: 24px; height: 24px; }
.explore { position: absolute; left: 1810px; top: 774px; width: 38px; height: 38px; display: grid; place-items: center; background: #fff; border: 1px solid #dadce0; border-radius: 3px; }
.explore svg { width: 18px; height: 21px; }

/* validator captures: --v is the vertical unit, em the horizontal one */
.shot { font: 10px "Liberation Sans", Arial, sans-serif; color: #222; }
.shot.one { --v: 1px; width: 639px; margin-left: 124px; }
.shot.two { --v: 1.065px; width: 630px; margin: 48px 0 0 127.500px; font-size: 10.730px; }
.shot h1, .shot h2, .shot p { margin: 0; white-space: nowrap; }
.shot h1 { height: calc(36 * var(--v)); padding-left: .4em; line-height: calc(35 * var(--v)); font-size: 1.916em; font-weight: 400; color: #fff; background: #365d95; border-radius: 4px 0 0 4px; }
.shot .intro { height: calc(39.500 * var(--v)); line-height: calc(39.500 * var(--v)); font-size: 1.195em; color: #444; }
.shot h2 { height: calc(6 * var(--v)); line-height: calc(6 * var(--v)); font-size: 1.192em; color: #000; }
.input { height: calc(117 * var(--v)); margin-top: calc(19.500 * var(--v)); padding-left: 2.150em; border: solid #d3d3d3; border-width: 1px 0 1px 1px; border-radius: 4px 0 0 4px; }
.legend { width: max-content; margin: calc(-8 * var(--v)) 0 0 -.13em; line-height: calc(14 * var(--v)); font-size: 1.190em; background: #fff; color: #222; }
.row { display: flex; align-items: center; height: calc(16 * var(--v)); }
.row > span { font-size: 1.185em; }
.row.show { margin-top: calc(13 * var(--v)); }
.opts { width: 17.100em; height: calc(14 * var(--v)); display: grid; grid-template-columns: 1.250em 3.900em 1.250em 3.900em 1.200em auto; align-items: center; margin: 0 .8em 0 .3em; padding-left: .4em; border: 1px solid #ddd; border-radius: 4px; white-space: nowrap; }
.opts em { font-size: .815em; font-style: normal; padding-top: 2px; }
.cb { width: 1em; height: 1em; border: 1px solid #767676; border-radius: 2px; background: #fff; margin-top: -2px; }
.btn { width: max-content; height: calc(16 * var(--v)); padding: 0 .5em; display: flex; align-items: center; border: 1px solid #858585; border-radius: 2px; background: #efefef; color: #000; font-size: .985em; white-space: nowrap; }
.options { padding: 0 .65em; }
.row.by { margin-top: calc(9.500 * var(--v)); }
.select { height: calc(14 * var(--v)); background: #fff; padding: 0 .3em; margin: 0 .5em 0 .2em; gap: .35em; }
.select svg { width: .8em; height: .6em; }
.row small { font-size: .985em; margin-left: .3em; color: #222; }
.shot .note { margin-top: calc(4.500 * var(--v)); height: calc(16 * var(--v)); line-height: calc(16 * var(--v)); font-size: 1.190em; color: #444; }
.check { margin-top: calc(4.500 * var(--v)); }
.ok { height: calc(22.500 * var(--v)); margin-top: calc(37.500 * var(--v)); padding-left: .45em; line-height: calc(20.500 * var(--v)); font-size: 1.046em; font-weight: 700; color: #111; background: #cfc; border: 1px solid #ccc; border-right: 0; border-radius: 3px 0 0 3px; white-space: nowrap; }
.shot .stat { height: calc(16 * var(--v)); line-height: calc(18 * var(--v)); font-size: .882em; color: #222; }
.rule { height: 1px; margin-top: calc(4.500 * var(--v)); background: repeating-linear-gradient(90deg, #999 0 2px, #ddd 2px 3px); }
.shot.two { margin-top: 47.500px; }

/* side panel */
.side { width: 56px; display: flex; flex-direction: column; align-items: center; border-left: 1px solid #dadce0; padding-top: 18px; }
.side svg { width: 20px; height: 20px; margin-bottom: 36px; }
.side hr { width: 20px; margin: -2px 0 37px; border: 0; border-top: 1px solid #dadce0; }
.side .plus { width: 14px; height: 14px; margin: 0; }
.side .next { width: 8px; height: 11px; margin: auto 2px 23px 0; }

/* taskbar */
.taskbar { flex: none; height: 40px; display: flex; background: linear-gradient(90deg, #1b1f1f, #1e1f22 24%, #2c2021 34%, #2b1f21 72%, #1f2021 88%, #1b1e20); color: #fff; }
.startbtn { width: 48px; display: grid; place-items: center; }
.search { width: 344px; padding-left: 12px; display: flex; align-items: center; gap: 11.500px; background: #f2f2f2; border: 1px solid #bbb; color: #333; font-size: 15px; letter-spacing: -.5px; word-spacing: .8px; }
.app { width: 49px; display: grid; place-items: center; }
.app svg { width: 24px; height: 24px; }
.run { background: linear-gradient(#76b9ed, #76b9ed) 50% 100% / 40px 2px no-repeat; }
.current { background: linear-gradient(#76b9ed, #76b9ed) 0 100% / 48px 2px no-repeat, linear-gradient(#544f51, #544f51) 0 0 / 48px 100% no-repeat; }
.game { background: linear-gradient(#4be33a, #4be33a) 50% 100% / 40px 2px no-repeat, linear-gradient(90deg, #3f7034 4px, #484142 4px) 50% 0 / 40px 100% no-repeat; }
.tray { margin-left: auto; display: flex; align-items: center; letter-spacing: -.2px; margin-right: 4px; border-right: 1px solid #666; padding-right: 19px; }
.weather { width: 22px; height: 19px; margin-right: 8px; }
.temp, .cond { font-size: 14px; padding-top: 1px; white-space: nowrap; letter-spacing: -.3px; }
.temp { width: 30px; }
.cond { width: 103px; }
.chev { width: 12px; height: 8px; margin-right: 11px; }
.lang { width: 39px; padding-left: 9px; letter-spacing: -.5px; }
.clock { width: 72px; margin-right: 9px; display: flex; flex-direction: column; align-items: center; line-height: 18px; }
.notif { width: 18px; height: 18px; }
```
